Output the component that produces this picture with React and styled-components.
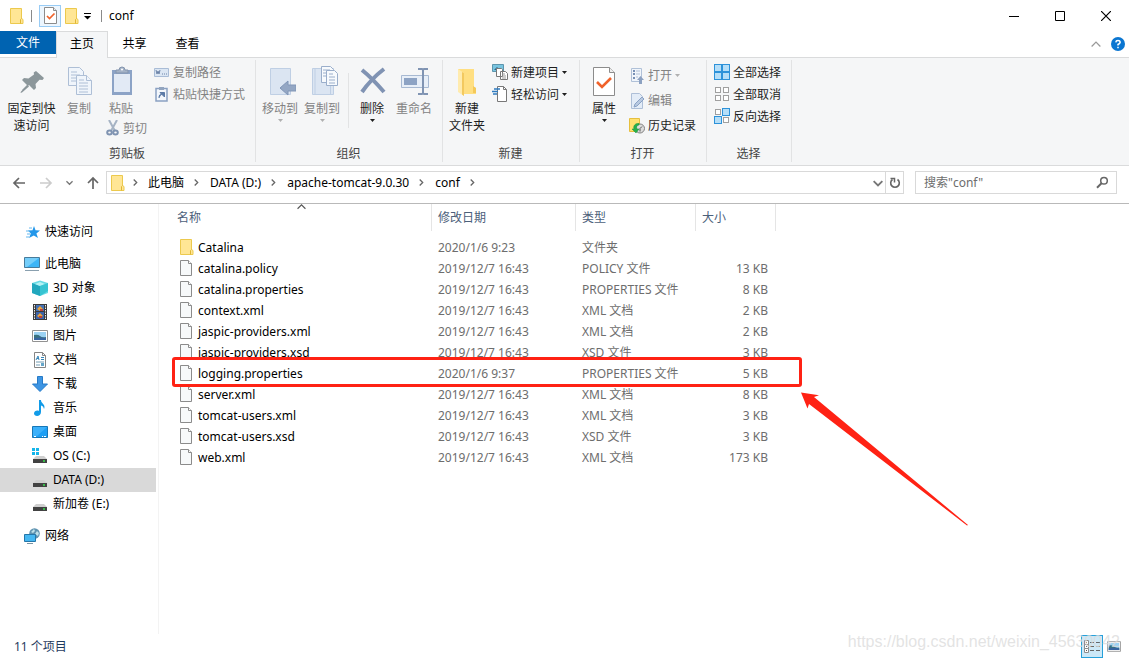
import styled, { createGlobalStyle, css } from "styled-components";

const GlobalStyle = createGlobalStyle`
  *, *::before, *::after {
    box-sizing: border-box;
  }
  body {
    margin: 0;
    background-color: #fff;
    color: #000;
    font: 12px/17px "Noto Sans", "Noto Sans CJK SC", sans-serif;
  }
  button, input {
    font: inherit;
    color: inherit;
    border: none;
    background: none;
    padding: 0;
  }
  svg {
    display: block;
    flex: none;
  }
`;

const Window = styled.div`
  display: flex;
  flex-direction: column;
  min-height: 100vh;
`;

const TitleBar = styled.header`
  display: flex;
  align-items: center;
  height: 31px;
  padding-left: 10px;
`;

const QuickButton = styled.button`
  display: flex;
  align-items: center;
  justify-content: center;
  width: 22px;
  height: 22px;
  border: solid 1px ${(p) => (p.$active ? "#99ccf5" : "transparent")};
  background-color: ${(p) => (p.$active ? "#edf6fe" : "transparent")};
`;

const Bar = styled.span`
  width: 1px;
  height: 12px;
  margin: 0 7px;
  background-color: #8a8a8a;
`;

const Title = styled.h1`
  flex: 1;
  margin: 0;
  font-size: 12px;
  font-weight: normal;
`;

const WindowButton = styled.button`
  display: flex;
  align-items: center;
  justify-content: center;
  width: 46px;
  height: 31px;
`;

const Tabs = styled.nav`
  display: flex;
  height: 27px;
  border-bottom: solid 1px #dadbdc;
`;

const Tab = styled.button`
  width: 53px;
  height: 26px;
  padding-bottom: 2px;
  ${(p) =>
    p.$file &&
    css`
      width: 56px;
      height: 23px;
      padding-bottom: 0;
      color: #fff;
      background-color: #0063b1;
    `}
  ${(p) =>
    p.$active &&
    css`
      width: 52px;
      height: 27px;
      padding-bottom: 4px;
      border: solid 1px #dadbdc;
      border-bottom: none;
      background-color: #f5f6f7;
    `}
`;

const TabTools = styled.div`
  display: flex;
  align-items: center;
  gap: 10px;
  margin-left: auto;
  padding-right: 4px;
`;

const Ribbon = styled.section`
  display: flex;
  height: 108px;
  padding: 2px 0 3px;
  background-color: #f5f6f7;
  border-bottom: solid 1px #dadbdc;
`;

const Group = styled.div`
  display: flex;
  flex: none;
  flex-direction: column;
  width: ${(p) => p.$width}px;
  border-right: solid 1px #e2e3e4;
`;

const GroupBody = styled.div`
  display: flex;
  flex: 1;
  padding-left: ${(p) => p.$pad}px;
`;

const GroupName = styled.div`
  height: 17px;
  padding-right: 1px;
  color: #444;
  text-align: center;
`;

const BigButton = styled.button`
  display: flex;
  flex-direction: column;
  align-items: center;
  gap: 2px;
  width: ${(p) => p.$width}px;
  height: 76px;
  padding-top: 6px;
  color: ${(p) => (p.$off ? "#838383" : "#1e1e1e")};
  white-space: pre-line;
`;

const SmallColumn = styled.div`
  display: flex;
  flex-direction: column;
  align-items: flex-start;
  padding: ${(p) => p.$top || 1}px 0 0 ${(p) => p.$left || 0}px;
`;

const SmallButton = styled.button`
  display: flex;
  align-items: center;
  gap: 3px;
  height: ${(p) => (p.$tall ? 25 : 22)}px;
  color: ${(p) => (p.$off ? "#838383" : "#1e1e1e")};
  white-space: nowrap;
`;

const PasteColumn = styled.div`
  width: 55px;
  & > ${BigButton} {
    height: 57px;
  }
  & > ${SmallButton} {
    padding-left: 7px;
  }
`;

const Divider = styled.span`
  width: 1px;
  height: 55px;
  margin: 13px 3px 0 5px;
  background-color: #e2e3e4;
`;

const NavBar = styled.div`
  display: flex;
  align-items: center;
  height: 38px;
  padding: 0 12px 4px;
  border-bottom: solid 1px #b9b9b9;
`;

const NavButtons = styled.div`
  display: flex;
  align-items: center;
  width: 94px;
  gap: 13px;
`;

const Address = styled.div`
  display: flex;
  flex: 1;
  align-items: center;
  height: 23px;
  margin-right: 11px;
  padding-left: 4px;
  border: solid 1px #d9d9d9;
`;

const Crumb = styled.button`
  display: flex;
  align-items: center;
  gap: 10px;
  padding: 0 11px 1px 0;
  white-space: nowrap;
`;

const CrumbStart = styled.span`
  display: flex;
  align-items: center;
  gap: 8px;
  padding-right: 10px;
`;

const AddressTools = styled.div`
  display: flex;
  align-items: center;
  gap: 2px;
  height: 21px;
  margin-left: auto;
`;

const Refresh = styled.button`
  display: flex;
  align-items: center;
  height: 21px;
  padding: 0 2px 0 3px;
  border-left: solid 1px #d9d9d9;
`;

const Search = styled.label`
  display: flex;
  align-items: center;
  width: 202px;
  height: 23px;
  padding: 0 7px 0 8px;
  border: solid 1px #d9d9d9;
  input {
    flex: 1;
    min-width: 0;
    outline: none;
  }
  input::placeholder {
    color: #6d6d6d;
    opacity: 1;
  }
`;

const Content = styled.div`
  display: flex;
  flex: 1;
`;

const Sidebar = styled.aside`
  width: 159px;
  padding: 16px 2px 0 0;
  border-right: solid 1px #f3f3f3;
`;

const Tree = styled.ul`
  margin: 0 0 8px;
  padding: 0;
  list-style: none;
`;

const TreeItem = styled.button`
  display: flex;
  align-items: center;
  gap: 5px;
  width: 100%;
  height: 24px;
  padding: 0 0 1px ${(p) => (p.$child ? 32 : 24)}px;
  background-color: ${(p) => (p.$selected ? "#d9d9d9" : "transparent")};
`;

const Files = styled.main`
  position: relative;
  flex: 1;
`;

const Table = styled.table`
  border-collapse: collapse;
  table-layout: fixed;
  width: 617px;
`;

const Th = styled.th`
  position: relative;
  width: ${(p) => p.$width}px;
  height: 33px;
  padding: 0 0 6px;
  font-weight: normal;
  color: #4c607a;
  text-align: left;
  span {
    display: block;
    height: 27px;
    padding: 5px 0 0 ${(p) => p.$pad || 6}px;
    border-right: solid 1px #e5e5e5;
  }
  svg {
    position: absolute;
    top: -2px;
    left: 138px;
  }
`;

const Td = styled.td`
  height: 21px;
  padding: 0 8px 0 6px;
  color: #6d6d6d;
  white-space: nowrap;
  text-align: ${(p) => (p.$right ? "right" : "left")};
`;

const FileName = styled(Td)`
  padding-left: 21px;
  color: #000;
  div {
    display: flex;
    align-items: center;
    gap: 4px;
  }
`;

const FileIconBox = styled.span`
  width: 14px;
  height: 17px;
`;

const Highlight = styled.div`
  position: absolute;
  top: 153px;
  left: 13px;
  width: 630px;
  height: 30px;
  border: solid 3px #ff2214;
  border-radius: 3px;
`;

const Arrow = styled.svg`
  position: absolute;
  top: 188px;
  left: 642px;
`;

const StatusBar = styled.footer`
  position: relative;
  display: flex;
  align-items: center;
  height: 26px;
  padding: 0 4px 1px 14px;
  color: #1f3b5e;
`;

const ViewButtons = styled.div`
  display: flex;
  margin-left: auto;
`;

const ViewButton = styled.button`
  display: flex;
  align-items: center;
  justify-content: center;
  width: 22px;
  height: 23px;
  border: solid 1px ${(p) => (p.$active ? "#26a0da" : "transparent")};
  background-color: ${(p) => (p.$active ? "#cce8f7" : "transparent")};
`;

const Watermark = styled.div`
  position: absolute;
  right: 9px;
  bottom: 9px;
  color: rgba(220, 220, 220, 0.8);
  font: 16px/18px "Liberation Sans", sans-serif;
  pointer-events: none;
`;

const FolderIcon = () => (
  <svg width="14" height="16" viewBox="0 0 14 16">
    <path d="M.5.5h11v10l1.500 1v4H.5z" fill="#ffe695" stroke="#ecc94d" />
    <path d="M10.500 15.500v-4l1-1" fill="none" stroke="#dfb636" />
  </svg>
);

const FileIcon = () => (
  <svg width="12" height="16" viewBox="0 0 12 16">
    <path d="M.5.5h8l3 3v12H.5z" fill="#f7f9fa" stroke="#8b8b8b" />
    <path d="M8.500.5v3h3" fill="#fff" stroke="#8b8b8b" />
  </svg>
);

const DownArrow = ({ off }) => (
  <svg width="5" height="3" viewBox="0 0 5 3">
    <path d="M0 0h5L2.500 3z" fill={off ? "#b0b0b0" : "#1e1e1e"} />
  </svg>
);

const Chevron = () => (
  <svg width="5" height="7" viewBox="0 0 5 7">
    <path d="M.7.5l3 3-3 3" fill="none" stroke="#666" strokeWidth="1.3" />
  </svg>
);

const CheckPage = () => (
  <svg width="24" height="32" viewBox="0 0 24 32">
    <path d="M1.500 1.500h16l5 5v23h-21z" fill="#fff" stroke="#8c8c8c" />
    <path d="M17.500 1.500v5h5" fill="#eee" stroke="#8c8c8c" />
    <path d="M5 16l5 5 9-9" fill="none" stroke="#f0622a" strokeWidth="2.600" />
  </svg>
);

const SmallCheckPage = () => (
  <svg width="13" height="17" viewBox="0 0 13 17">
    <path d="M.5.5h9l3 3v13H.5z" fill="#fff" stroke="#8c8c8c" />
    <path d="M9.500.5v3h3" fill="#eee" stroke="#8c8c8c" />
    <path d="M3 9l2.500 2.500L10.500 6.500" fill="none" stroke="#f0622a" strokeWidth="1.700" />
  </svg>
);

const PinIcon = () => (
  <svg width="32" height="32" viewBox="0 0 32 32">
    <path d="M20 5l8 7-1.500 2-3-.3-4 4.300.5 4-2 2-5-5L7 25l-1-1 5-5-5-5 2-2 4.500.5L18 8.500l-.3-2z" fill="#8c979b" />
    <path d="M11.500 19L5 25.500 4.500 27 6 26.500l7-6z" fill="#8c979b" />
  </svg>
);

const CopyIcon = () => (
  <svg width="32" height="32" viewBox="0 0 32 32">
    <g fill="#f0f5fb" stroke="#aebfd6">
      <path d="M5.500 1.500h11l4 4v14h-15z" />
      <path d="M8 6h6M8 9h9M8 12h9M8 15h9" />
      <path d="M13.500 9.500h10l5 5v14h-15z" />
      <path d="M23.500 9.500v5h5M16 14h5M16 17h9M16 20h9M16 23h9M16 26h9" />
    </g>
  </svg>
);

const PasteIcon = () => (
  <svg width="32" height="32" viewBox="0 0 32 32">
    <path d="M7 4h20v25H7z" fill="#8ca3c6" />
    <path d="M9 8h16v18H9z" fill="#e2eaf5" />
    <path d="M11 7V4h3a3 3 0 0 1 6 0h3v3z" fill="#a4b2c6" stroke="#8395ae" />
    <circle cx="17" cy="3.500" r="1" fill="#fff" />
  </svg>
);

const ScissorsIcon = () => (
  <svg width="14" height="16" viewBox="0 0 14 16">
    <path d="M3 0l6 11M11 0L5 11" stroke="#a6b3c4" strokeWidth="2" />
    <ellipse cx="3.500" cy="12.500" rx="2.300" ry="2" fill="none" stroke="#7f93b1" strokeWidth="2" />
    <ellipse cx="9.500" cy="12.500" rx="2.300" ry="2" fill="none" stroke="#7f93b1" strokeWidth="2" />
  </svg>
);

const PathIcon = () => (
  <svg width="16" height="16" viewBox="0 0 16 16">
    <path d="M.5 4.500h14v8H.5z" fill="#dbe6f3" stroke="#a9bcd6" />
    <path d="M2 6l1 4 1-3 1 3 1-4M8 10h1M10 10h1M12 10h1" fill="none" stroke="#6d84a8" />
  </svg>
);

const ShortcutIcon = () => (
  <svg width="16" height="16" viewBox="0 0 16 16">
    <path d="M2 2.500h11V15H2z" fill="#f3f7fc" stroke="#8ba1c2" strokeWidth="1.500" />
    <path d="M5 1h5v3H5z" fill="#93a5bf" />
    <path d="M5 12c0-3 1-4 3-4M6 6.500h4.500V11z" fill="#5b7aa7" stroke="#5b7aa7" />
  </svg>
);

const MoveIcon = () => (
  <svg width="32" height="32" viewBox="0 0 32 32">
    <path d="M6.500 2.500h20v26h-20z" fill="#dbe5f2" stroke="#bfcfe4" />
    <path d="M16 22l8-7v4h8v6h-8v4z" fill="#94a7c4" stroke="#8196b7" />
  </svg>
);

const CopyToIcon = () => (
  <svg width="32" height="32" viewBox="0 0 32 32">
    <path d="M6.500 2.500h21v26h-21z" fill="#dbe5f2" stroke="#bfcfe4" />
    <path d="M9 2v26M24.500 20v9" stroke="#bfcfe4" />
    <g fill="#f7fafd" stroke="#9aaecb">
      <path d="M15.500.5h9l3 3v13h-12z" />
      <path d="M17 4h7M17 7h7M17 10h7" />
      <path d="M20.500 4.500h8l3 3v12h-11z" />
      <path d="M23 8h4M23 11h6M23 14h6M23 17h6" />
    </g>
  </svg>
);

const DeleteIcon = () => (
  <svg width="32" height="32" viewBox="0 0 32 32">
    <path d="M6 4q10 8 22 22M28 3Q15 13 6 26" fill="none" stroke="#8093b3" strokeWidth="4" />
  </svg>
);

const RenameIcon = () => (
  <svg width="32" height="32" viewBox="0 0 32 32">
    <path d="M3.500 9.500h27v12h-27z" fill="#e8eff8" stroke="#a7b9d2" />
    <path d="M6 12h13v7H6z" fill="#8da3c4" />
    <path d="M20 3h4q1 0 1 2v21q0 2-1 2h-4M30 3h-4q-1 0-1 2v21q0 2 1 2h4" fill="none" stroke="#8094b3" strokeWidth="2" />
  </svg>
);

const BigFolderIcon = () => (
  <svg width="32" height="32" viewBox="0 0 32 32">
    <path d="M7 3h16v18l2 1v6H10z" fill="#ffdf82" />
    <path d="M7 3l6 4v23l-6-4z" fill="#ffebae" />
    <path d="M11 6l2 1v23l-2-1.500z" fill="#f3c95f" />
    <path d="M22 20l3 2v5h-3z" fill="#f4c95a" />
  </svg>
);

const NewItemIcon = () => (
  <svg width="16" height="16" viewBox="0 0 16 16">
    <path d="M.5.5h11v7H.5z" fill="#79c4df" stroke="#5c95ad" />
    <path d="M2 6l3-3 3 3z" fill="#25658b" />
    <path d="M4.500 4.500h5l1 1v7h-6zM8.500 7.500h5l2 2v6h-7z" fill="#fff" stroke="#787878" />
    <path d="M10 10h3M10 12h4M10 14h4" stroke="#999" />
  </svg>
);

const EasyAccessIcon = () => (
  <svg width="16" height="16" viewBox="0 0 16 16">
    <path d="M5.500.5h6l3 3v12h-9z" fill="#fff" stroke="#787878" />
    <path d="M11.500.5v3h3" fill="none" stroke="#787878" />
    <path d="M2 3h6M0 5.500h6M1 8h4" stroke="#2f7bc0" strokeWidth="1.300" />
  </svg>
);

const OpenIcon = () => (
  <svg width="16" height="16" viewBox="0 0 16 16">
    <path d="M2.500.5h10v13h-10z" fill="#f0f5fb" stroke="#b0c1d8" />
    <path d="M4 3h2M4 6h2M4 10h2" stroke="#7790b5" strokeWidth="2" />
    <path d="M7 3h4M7 6h4M7 9h2" stroke="#b0c1d8" />
    <path d="M8 12l3.500-4 3.500 4h-2v4h-3v-4z" fill="#8ca1c1" />
  </svg>
);

const EditIcon = () => (
  <svg width="16" height="16" viewBox="0 0 16 16">
    <path d="M2.500.5h8l3 3v12h-11z" fill="#e3ecf7" stroke="#aebfd7" />
    <path d="M6 11l7-7 2 2-7 7-3 1z" fill="#b8c9e0" stroke="#8aa2c5" />
  </svg>
);

const HistoryIcon = () => (
  <svg width="16" height="16" viewBox="0 0 16 16">
    <path d="M.5.5h10v13H.5z" fill="#ffe170" stroke="#e6bf3e" />
    <circle cx="11" cy="10.500" r="4.500" fill="#ddd" stroke="#818181" />
    <path d="M11 10.500l2-2M11 10.500v3" stroke="#555" />
    <path d="M10 5.500C6 5 4 8 5 11H3l4 4 3-4H8c-1-2 0-4 2-4z" fill="#27b04c" stroke="#16903a" strokeWidth=".5" />
  </svg>
);

const SelectIcon = ({ blue }) => (
  <svg width="16" height="16" viewBox="0 0 16 16">
    {[0, 1, 2, 3].map((i) => {
      const on = blue.includes(i);
      const x = i % 2 ? 8.5 : 0.5;
      const y = i > 1 ? 8.5 : 0.5;
      return on ? (
        <rect key={i} x={x} y={y} width="7" height="7" fill="#b5def8" stroke="#2d92d9" />
      ) : (
        <rect key={i} x={x + 1} y={y + 1} width="5" height="5" fill="#fff" stroke="#a0a0a0" />
      );
    })}
  </svg>
);

const StarIcon = () => (
  <svg width="16" height="16" viewBox="0 0 16 16">
    <path d="M10 2l1.500 4.200 4.500.3-3.600 3L14 14l-4.200-2.500L5 14l1.800-4.500L4 6.500l4.500-.3z" fill="#2397ea" />
    <path d="M5 4h3M2 7h4M3 10h3M2 13h3" stroke="#66b9ef" />
  </svg>
);

const PcIcon = () => (
  <svg width="16" height="16" viewBox="0 0 16 16">
    <path d="M.5 1.500h15v10H.5z" fill="#3db5f7" stroke="#477b9b" />
    <path d="M1 2h14L3 11H1z" fill="#75cefa" />
    <path d="M1 14.500h14" stroke="#8aa0af" />
  </svg>
);

const CubeIcon = () => (
  <svg width="16" height="16" viewBox="0 0 16 16">
    <path d="M0 3l8-2.500L16 3v10l-8 3-8-3z" fill="#6adbe5" />
    <path d="M0 3l8 3v10l-8-3z" fill="#22a7bd" />
    <path d="M3 4l5 2 5-2-5-2z" fill="#b5f2f4" />
    <path d="M8 6l8-3v8l-8 5z" fill="#37c4d2" />
  </svg>
);

const VideoIcon = () => (
  <svg width="16" height="16" viewBox="0 0 16 16">
    <path d="M1 0h14v16H1z" fill="#3c3c3c" />
    <path d="M2.500 1v14M13.500 1v14" stroke="#eee" strokeDasharray="1.500 1" />
    <path d="M4 1h8v6H4z" fill="#4473b8" />
    <path d="M4 8h8v7H4z" fill="#3d65ab" />
    <path d="M5 5l3-3 3 3-3 2zM5 12l3-3 3 3-3 2z" fill="#eca43a" />
    <path d="M8 5h3v2H8zM7 12h3v2H7z" fill="#bd4437" />
  </svg>
);

const PictureIcon = ({ small }) => (
  <svg width={small ? 14 : 16} height={small ? 11 : 16} viewBox={small ? "0 2 16 12" : "0 0 16 16"}>
    <path d="M.5 2.500h15v11H.5z" fill="#fff" stroke="#929292" />
    <path d="M2 4h12v8H2z" fill="#9bd2f3" />
    <path d="M2 7q4-1 6 1t6 1v3H2z" fill="#397180" />
    <path d="M2 10q7-1 12 0v2H2z" fill="#3764a0" />
  </svg>
);

const DocumentIcon = () => (
  <svg width="16" height="16" viewBox="0 0 16 16">
    <path d="M2.500.5h8l3 3v12h-11z" fill="#fff" stroke="#858585" />
    <path d="M10.500.5v3h3" fill="none" stroke="#858585" />
    <path d="M4 8l2-4 1 4M5 6.500h2M9 5.500h3M9 7.500h3" fill="none" stroke="#3385b9" />
    <path d="M4 10h8M4 13h4" stroke="#739db4" />
    <path d="M9 11h3v3H9z" fill="#65a6ca" />
  </svg>
);

const DownloadIcon = () => (
  <svg width="16" height="16" viewBox="0 0 16 16">
    <path d="M5.500.5h5V8h5L8 15.500.5 8h5z" fill="#3d95e3" stroke="#267ac7" />
  </svg>
);

const MusicIcon = () => (
  <svg width="16" height="16" viewBox="0 0 16 16">
    <path d="M7 0h2c0 4 5 4 3 9-.5-2-1-3-3-3.500V12c0 5-7 5-7 1.500 0-2.500 3-3.500 5-2.500z" fill="#119be8" />
  </svg>
);

const DesktopIcon = () => (
  <svg width="16" height="16" viewBox="0 0 16 16">
    <path d="M.5 2.500h15v11H.5z" fill="#1d9ff5" stroke="#1777b7" />
    <path d="M1 3h14L5 12H1z" fill="#3bb0fa" />
    <path d="M2 12.500h2M10 12.500h1M12 12.500h2" stroke="#fff" />
  </svg>
);

const DriveIcon = ({ system }) => (
  <svg width="16" height="16" viewBox="0 0 16 16">
    <path d="M4 8h8l3 3H1z" fill="#cfcfcf" />
    <path d="M1 11h14v4H1z" fill="#424242" />
    <path d="M11 13h2" stroke="#36e24c" strokeWidth="1.500" />
    {system && <path d="M0 0h3v3H0zM4 0h3v3H4zM0 4h3v3H0zM4 4h3v3H4z" fill="#14b5ea" />}
  </svg>
);

const NetworkIcon = () => (
  <svg width="16" height="16" viewBox="0 0 16 16">
    <circle cx="10.500" cy="5.500" r="5.300" fill="#5f93b0" />
    <path d="M7 4l3-3 1 2-2 2zM11 6l2-3 2 2-1 3z" fill="#bde0e9" />
    <path d="M.5 6.500h11v7H.5z" fill="#45b7f1" stroke="#2476a9" />
    <path d="M3 15.500h6" stroke="#7994a3" />
  </svg>
);

const HelpIcon = () => (
  <svg width="14" height="14" viewBox="0 0 14 14">
    <circle cx="7" cy="7" r="7" fill="#0b76d1" />
    <path d="M4.800 5.300Q5 3.500 7 3.500t2.200 1.600Q9 6.500 7 7.500V8.500M7 9.800v1.400" fill="none" stroke="#fff" strokeWidth="1.500" />
  </svg>
);

const NavArrow = ({ turn = 0, color = "#666" }) => (
  <svg width="14" height="14" viewBox="0 0 14 14">
    <path d="M13 7H2M7 2L2 7l5 5" fill="none" stroke={color} strokeWidth="1.700" transform={`rotate(${turn} 7 7)`} />
  </svg>
);

const Caret = ({ size = 8, up, color = "#777", weight = 1.5 }) => (
  <svg width={size} height={size} viewBox="0 0 8 8">
    <path d={up ? "M.5 6L4 2.500 7.500 6" : "M.5 2.500L4 6l3.500-3.500"} fill="none" stroke={color} strokeWidth={weight} />
  </svg>
);

const tree = [
  [{ name: "快速访问", Icon: StarIcon }],
  [
    { name: "此电脑", Icon: PcIcon },
    { name: "3D 对象", Icon: CubeIcon, child: true },
    { name: "视频", Icon: VideoIcon, child: true },
    { name: "图片", Icon: PictureIcon, child: true },
    { name: "文档", Icon: DocumentIcon, child: true },
    { name: "下载", Icon: DownloadIcon, child: true },
    { name: "音乐", Icon: MusicIcon, child: true },
    { name: "桌面", Icon: DesktopIcon, child: true },
    { name: "OS (C:)", Icon: () => <DriveIcon system />, child: true },
    { name: "DATA (D:)", Icon: DriveIcon, child: true, selected: true },
    { name: "新加卷 (E:)", Icon: DriveIcon, child: true },
  ],
  [{ name: "网络", Icon: NetworkIcon }],
];

const files = [
  ["Catalina", "2020/1/6 9:23", "文件夹", ""],
  ["catalina.policy", "2019/12/7 16:43", "POLICY 文件", "13 KB"],
  ["catalina.properties", "2019/12/7 16:43", "PROPERTIES 文件", "8 KB"],
  ["context.xml", "2019/12/7 16:43", "XML 文档", "2 KB"],
  ["jaspic-providers.xml", "2019/12/7 16:43", "XML 文档", "2 KB"],
  ["jaspic-providers.xsd", "2019/12/7 16:43", "XSD 文件", "3 KB"],
  ["logging.properties", "2020/1/6 9:37", "PROPERTIES 文件", "5 KB"],
  ["server.xml", "2019/12/7 16:43", "XML 文档", "8 KB"],
  ["tomcat-users.xml", "2019/12/7 16:43", "XML 文档", "3 KB"],
  ["tomcat-users.xsd", "2019/12/7 16:43", "XSD 文件", "3 KB"],
  ["web.xml", "2019/12/7 16:43", "XML 文档", "173 KB"],
];

const crumbs = ["此电脑", "DATA (D:)", "apache-tomcat-9.0.30", "conf"];

const Big = ({ icon, label, width, off, menu }) => (
  <BigButton $width={width} $off={off}>
    {icon}
    <span>{label}</span>
    {menu && <DownArrow off={off} />}
  </BigButton>
);

const Small = ({ icon, label, off, tall, menu }) => (
  <SmallButton $off={off} $tall={tall}>
    {icon}
    <span>{label}</span>
    {menu && <DownArrow off={off} />}
  </SmallButton>
);

const RibbonGroup = ({ name, width, pad, children }) => (
  <Group $width={width}>
    <GroupBody $pad={pad}>{children}</GroupBody>
    <GroupName>{name}</GroupName>
  </Group>
);

const ExplorerRibbon = () => (
  <Ribbon>
    <RibbonGroup name='剪贴板' width={256} pad={4}>
      <Big icon={<PinIcon />} label={"固定到快\n速访问"} width={55} />
      <Big icon={<CopyIcon />} label='复制' width={40} off />
      <PasteColumn>
        <Big icon={<PasteIcon />} label='粘贴' width={44} off />
        <Small icon={<ScissorsIcon />} label='剪切' off />
      </PasteColumn>
      <SmallColumn>
        <Small icon={<PathIcon />} label='复制路径' off />
        <Small icon={<ShortcutIcon />} label='粘贴快捷方式' off />
      </SmallColumn>
    </RibbonGroup>
    <RibbonGroup name='组织' width={187} pad={3}>
      <Big icon={<MoveIcon />} label='移动到' width={42} off menu />
      <Big icon={<CopyToIcon />} label='复制到' width={42} off menu />
      <Divider />
      <Big icon={<DeleteIcon />} label='删除' width={40} menu />
      <Big icon={<RenameIcon />} label='重命名' width={44} off />
    </RibbonGroup>
    <RibbonGroup name='新建' width={137} pad={2}>
      <Big icon={<BigFolderIcon />} label={"新建\n文件夹"} width={44} />
      <SmallColumn $left={3}>
        <Small icon={<NewItemIcon />} label='新建项目' menu />
        <Small icon={<EasyAccessIcon />} label='轻松访问' menu />
      </SmallColumn>
    </RibbonGroup>
    <RibbonGroup name='打开' width={127} pad={3}>
      <Big icon={<CheckPage />} label='属性' width={42} menu />
      <SmallColumn $top={3} $left={4}>
        <Small icon={<OpenIcon />} label='打开' off tall menu />
        <Small icon={<EditIcon />} label='编辑' off tall />
        <Small icon={<HistoryIcon />} label='历史记录' tall />
      </SmallColumn>
    </RibbonGroup>
    <RibbonGroup name='选择' width={85} pad={7}>
      <SmallColumn>
        <Small icon={<SelectIcon blue={[0, 1, 2, 3]} />} label='全部选择' />
        <Small icon={<SelectIcon blue={[]} />} label='全部取消' />
        <Small icon={<SelectIcon blue={[1, 2]} />} label='反向选择' />
      </SmallColumn>
    </RibbonGroup>
  </Ribbon>
);

const FileTable = () => (
  <Table>
    <thead>
      <tr>
        <Th $width={273} $pad={18}>
          <span>名称</span>
          <Caret up size={9} color='#555' weight={1} />
        </Th>
        <Th $width={144}>
          <span>修改日期</span>
        </Th>
        <Th $width={120}>
          <span>类型</span>
        </Th>
        <Th $width={80}>
          <span>大小</span>
        </Th>
      </tr>
    </thead>
    <tbody>
      {files.map(([name, date, type, size], i) => (
        <tr key={name}>
          <FileName>
            <div>
              <FileIconBox>{i === 0 ? <FolderIcon /> : <FileIcon />}</FileIconBox>
              {name}
            </div>
          </FileName>
          <Td>{date}</Td>
          <Td>{type}</Td>
          <Td $right>{size}</Td>
        </tr>
      ))}
    </tbody>
  </Table>
);

export default function App() {
  return (
    <Window>
      <GlobalStyle />
      <TitleBar>
        <FolderIcon />
        <Bar />
        <QuickButton $active aria-label='属性'>
          <SmallCheckPage />
        </QuickButton>
        <QuickButton aria-label='新建文件夹'>
          <FolderIcon />
        </QuickButton>
        <QuickMenu />
        <Bar />
        <Title>conf</Title>
        <WindowButton aria-label='最小化'>
          <svg width="10" height="10" viewBox="0 0 10 10">
            <path d="M0 5.500h10" stroke="#000" />
          </svg>
        </WindowButton>
        <WindowButton aria-label='最大化'>
          <svg width="10" height="10" viewBox="0 0 10 10">
            <path d="M.5.5h9v9h-9z" fill="none" stroke="#000" />
          </svg>
        </WindowButton>
        <WindowButton aria-label='关闭'>
          <svg width="10" height="10" viewBox="0 0 10 10">
            <path d="M0 0l10 10M10 0L0 10" stroke="#000" strokeWidth="1.200" />
          </svg>
        </WindowButton>
      </TitleBar>
      <Tabs>
        <Tab $file>文件</Tab>
        <Tab $active>主页</Tab>
        <Tab>共享</Tab>
        <Tab>查看</Tab>
        <TabTools>
          <Caret up size={10} color='#999' weight={1} />
          <HelpIcon />
        </TabTools>
      </Tabs>
      <ExplorerRibbon />
      <NavBar>
        <NavButtons>
          <NavArrow />
          <NavArrow turn={180} color='#ccc' />
          <Caret size={7} />
          <NavArrow turn={90} />
        </NavButtons>
        <Address>
          <CrumbStart>
            <FolderIcon />
            <Chevron />
          </CrumbStart>
          {crumbs.map((name) => (
            <Crumb key={name}>
              {name}
              <Chevron />
            </Crumb>
          ))}
          <AddressTools>
            <Caret size={10} />
            <Refresh aria-label='刷新'>
              <svg width="12" height="12" viewBox="0 0 12 12">
                <path d="M3.500 2.500A4.300 4.300 0 1 0 8.500 2.500" fill="none" stroke="#666" strokeWidth="1.600" />
                <path d="M1.500 1.500h4v4" fill="none" stroke="#666" strokeWidth="1.500" />
              </svg>
            </Refresh>
          </AddressTools>
        </Address>
        <Search>
          <input type='text' aria-label='搜索' placeholder='搜索"conf"' />
          <svg width="13" height="13" viewBox="0 0 13 13">
            <circle cx="8" cy="4.800" r="3.300" fill="none" stroke="#666" strokeWidth="1.500" />
            <path d="M5.500 7.200L1 11.700" stroke="#666" strokeWidth="2" />
          </svg>
        </Search>
      </NavBar>
      <Content>
        <Sidebar>
          {tree.map((items) => (
            <Tree key={items[0].name}>
              {items.map(({ name, Icon, child, selected }) => (
                <li key={name}>
                  <TreeItem $child={child} $selected={selected}>
                    <Icon />
                    {name}
                  </TreeItem>
                </li>
              ))}
            </Tree>
          ))}
        </Sidebar>
        <Files>
          <FileTable />
          <Highlight />
          <Arrow width="168" height="135" viewBox="0 0 168 135">
            <path d="M0 .5l18 2.700-5 1.800 154 128-1 .5L8 12l-1.500 4.500z" fill="#ff2214" />
          </Arrow>
        </Files>
      </Content>
      <StatusBar>
        11 个项目
        <ViewButtons>
          <ViewButton $active aria-label='详细信息'>
            <svg width="16" height="16" viewBox="0 0 16 16">
              <path d="M.5 1.500h4v4h-4zM.5 5.500h4v4h-4zM.5 9.500h4v4h-4z" fill="#fff" stroke="#8c8c8c" />
              <path d="M2 3.500h1M2 7.500h1M2 11.500h1" stroke="#555" />
              <path d="M6 3.500h4M12 3.500h4M6 7.500h4M12 7.500h4M6 11.500h4M12 11.500h4" stroke="#666" />
            </svg>
          </ViewButton>
          <ViewButton aria-label='大图标'>
            <PictureIcon small />
          </ViewButton>
        </ViewButtons>
        <Watermark>https://blog.csdn.net/weixin_45630042</Watermark>
      </StatusBar>
    </Window>
  );
}

const QuickMenu = () => (
  <svg width="11" height="8" viewBox="0 0 11 8">
    <path d="M1 1.500h7" stroke="#000" />
    <path d="M1 4h7L4.500 7.500z" fill="#000" />
  </svg>
);
